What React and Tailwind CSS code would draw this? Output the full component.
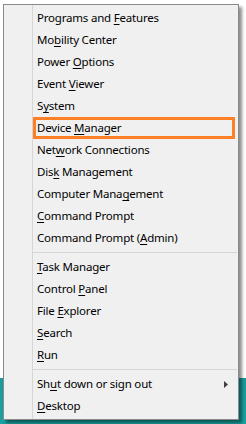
import React from "react";

const items = [
  ["Programs and ", "F", "eatures"],
  ["Mo", "b", "ility Center"],
  ["Power ", "O", "ptions"],
  ["Event ", "V", "iewer"],
  ["S", "y", "stem"],
  ["Device ", "M", "anager", "selected"],
  ["Net", "w", "ork Connections"],
  ["Dis", "k", " Management"],
  ["Computer Mana", "g", "ement"],
  ["", "C", "ommand Prompt"],
  ["Command Prompt (", "A", "dmin)"],
  "sep",
  ["", "T", "ask Manager"],
  ["Control ", "P", "anel"],
  ["File ", "E", "xplorer"],
  ["", "S", "earch"],
  ["", "R", "un"],
  "sep",
  ["Sh", "u", "t down or sign out", "submenu"],
  ["", "D", "esktop"],
];

const MenuItem = ({ before, key_, after, flag }) => {
  const selected = flag === "selected";
  return (
    <div
      className={`h-[22px] mr-[3px] flex items-center justify-between ${
        selected ? "border-[3px] border-[#ff7f27] pl-[1px]" : "pl-[4px]"
      }`}
    >
      <span className="whitespace-nowrap">
        {before}
        <span className="underline underline-offset-[2px]">{key_}</span>
        {after}
      </span>
      {flag === "submenu" && (
        <svg width="4" height="7" viewBox="0 0 4 7" className="mr-[7px]">
          <path d="M0 0 L4 3.5 L0 7 Z" fill="#404040" />
        </svg>
      )}
    </div>
  );
};

export default function App() {
  return (
    <div className="w-[246px] h-[424px] bg-[linear-gradient(to_bottom,#ffffff_0,#ffffff_378px,#1b9b9b_378px,#17a3a0_424px)] pl-[3px] pt-[4px] overflow-hidden">
      <div className="w-[236px] h-[416px] bg-[#f0f0f0] border border-[#8a8a8a] shadow-[3px_3px_3px_rgba(0,0,0,0.45)] flex pt-[2px] pb-[2px] font-['Noto_Sans',sans-serif] text-[11.5px] tracking-[-0.2px] text-black">
        <div className="w-[28px] shrink-0" />
        <div className="flex-1 border-l border-[#d6d6d6] -mt-[2px] -mb-[2px] pt-[2px]">
          {items.map((it, i) =>
            it === "sep" ? (
              <div key={i} className="h-[7px] flex items-center mr-[1px]">
                <div className="h-px w-full bg-[#d6d6d6]" />
              </div>
            ) : (
              <MenuItem key={i} before={it[0]} key_={it[1]} after={it[2]} flag={it[3]} />
            )
          )}
        </div>
      </div>
    </div>
  );
}
